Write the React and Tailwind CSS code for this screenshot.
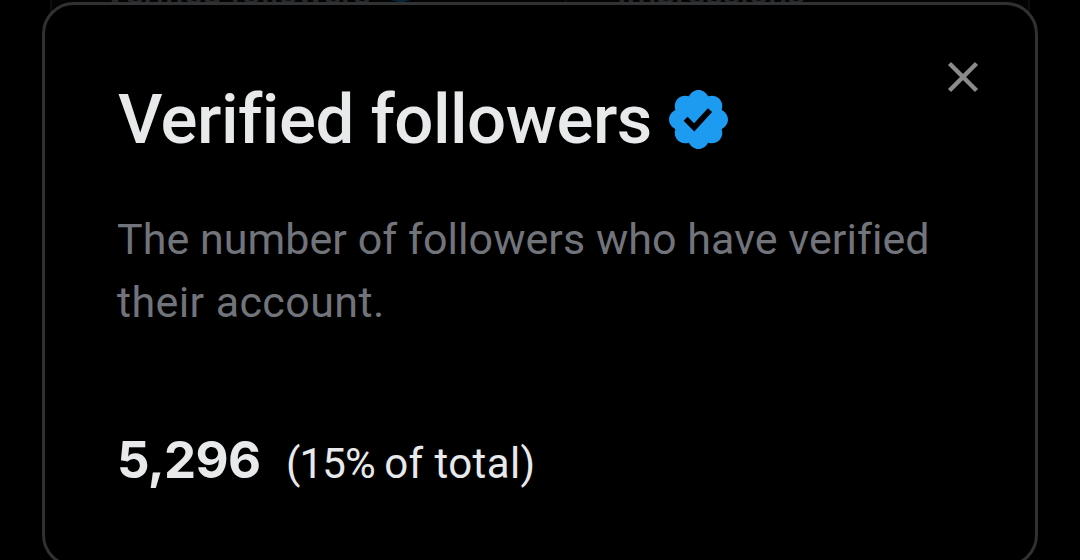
import React from "react";

const VerifiedBadge = ({ className }) => (
  <svg viewBox="0 0 24 24" fill="currentColor" className={className}>
    <path d="M22.25 12c0-1.43-.88-2.67-2.19-3.34.46-1.39.2-2.9-.81-3.91s-2.52-1.27-3.91-.81c-.66-1.31-1.91-2.19-3.34-2.19s-2.67.88-3.33 2.19c-1.4-.46-2.91-.2-3.92.81s-1.26 2.52-.8 3.91c-1.31.67-2.2 1.91-2.2 3.34s.89 2.67 2.2 3.34c-.46 1.39-.21 2.9.8 3.91s2.52 1.26 3.91.81c.67 1.31 1.91 2.19 3.34 2.19s2.68-.88 3.34-2.19c1.39.45 2.9.2 3.91-.81s1.27-2.52.81-3.91c1.31-.67 2.19-1.91 2.19-3.34zm-11.71 4.2L6.8 12.46l1.41-1.42 2.26 2.26 4.8-5.23 1.47 1.36-6.2 6.77z" />
  </svg>
);

const CloseIcon = ({ className }) => (
  <svg viewBox="0 0 32 32" fill="none" stroke="currentColor" className={className}>
    <path d="M2.5 2.5l27 27M29.5 2.5l-27 27" strokeWidth="4.4" />
  </svg>
);

// Dimmed stat cards that stay behind the dialog
const Backdrop = () => (
  <div className="absolute inset-x-0 -top-12 flex h-20 px-[50px] text-[#26282a]">
    <div className="flex w-[515px] items-center border-l-2 border-[#0c0d0e] bg-[#030304] pl-[52px]">
      <span className="whitespace-nowrap text-[34px] font-medium leading-[80px]">
        Verified followers
      </span>
      <VerifiedBadge className="ml-3.5 -mt-1 size-8 text-[#06243a]" />
    </div>
    <div className="flex flex-1 items-center border-x-2 border-[#0c0d0e] bg-[#030304] pl-[50px]">
      <span className="text-[34px] font-medium leading-[80px]">Impressions</span>
    </div>
  </div>
);

const App = () => {
  return (
    <div className="relative h-[560px] overflow-hidden bg-black px-[42px] pt-0.5 font-['Roboto',sans-serif] text-[#e7e9ea]">
      <Backdrop />
      <div className="relative h-[565px] rounded-[32px] border-3 border-[#2f3133] bg-black pl-[73px] pr-14">
        <div className="flex justify-between">
          <div className="flex items-center pt-[77px]">
            <h1 className="w-[547px] whitespace-nowrap text-[69px] font-medium leading-[76px] tracking-[-0.5px]">
              Verified followers
            </h1>
            <VerifiedBadge className="-ml-px mb-0.5 size-[69px] text-[#1d9bf0]" />
          </div>
          <button aria-label="Close" className="mt-14 size-8 text-[#8a8b8d]">
            <CloseIcon className="size-8" />
          </button>
        </div>
        <p className="-ml-px mt-[50px] whitespace-nowrap text-[43px] leading-[63px] tracking-[0.05px] text-[#71747a]">
          The number of followers who have verified
          <br />
          <span className="tracking-[0.4px]">their account.</span>
        </p>
        <div className="-ml-px mt-[92px] flex items-baseline">
          <span className="w-[169px] font-['Inter',sans-serif] text-[51px] font-bold leading-[68px] tracking-[-0.7px]">
            5,296
          </span>
          <span className="whitespace-nowrap text-[42px] tracking-[0.4px]">
            <span className="tracking-[-0.9px]">(15% </span>
            of total)
          </span>
        </div>
      </div>
    </div>
  );
};

export default App;
